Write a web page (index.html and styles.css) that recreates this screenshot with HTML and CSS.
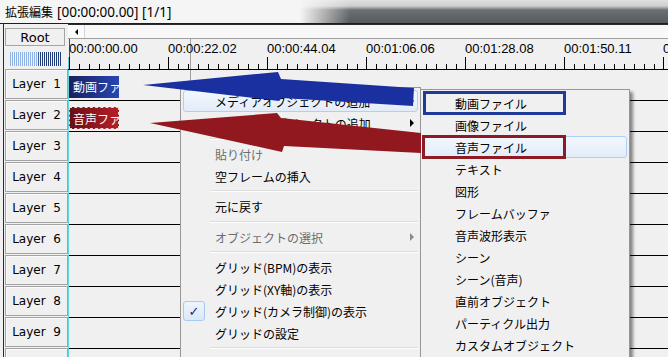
FILE: index.html
```html
<!DOCTYPE html>
<html lang="ja">
<head>
    <meta charset="UTF-8">
    <title>拡張編集</title>
    <link rel="stylesheet" href="styles.css">
</head>
<body>
    <div class="window">
        <div class="titlebar">
            <span class="title-jp">拡張編集</span>
            <span class="title-time">[00:00:00.00] [1/1]</span>
        </div>

        <div class="editor">
            <div class="side">
                <div class="root-btn">Root</div>
                <div class="meter"></div>
                <div class="layer-btn">Layer  1</div>
                <div class="layer-btn">Layer  2</div>
                <div class="layer-btn">Layer  3</div>
                <div class="layer-btn">Layer  4</div>
                <div class="layer-btn">Layer  5</div>
                <div class="layer-btn">Layer  6</div>
                <div class="layer-btn">Layer  7</div>
                <div class="layer-btn">Layer  8</div>
                <div class="layer-btn">Layer  9</div>
                <div class="layer-btn">Layer 10</div>
            </div>

            <div class="timeline">
                <div class="hscroll">
                    <span class="hscroll-btn"></span>
                    <span class="hscroll-thumb"></span>
                </div>
                <div class="ruler">
                    <svg class="ruler-ticks" width="600" height="30" viewBox="0 0 600 30">
                        <defs>
                            <pattern id="ticks" x="1" y="0" width="99" height="30" patternUnits="userSpaceOnUse">
                                <rect x="0" y="18" width="1" height="12" fill="#000"/>
                                <rect x="10" y="25" width="1" height="5" fill="#000"/>
                                <rect x="20" y="25" width="1" height="5" fill="#000"/>
                                <rect x="30" y="25" width="1" height="5" fill="#000"/>
                                <rect x="40" y="25" width="1" height="5" fill="#000"/>
                                <rect x="50" y="25" width="1" height="5" fill="#000"/>
                                <rect x="60" y="25" width="1" height="5" fill="#000"/>
                                <rect x="70" y="25" width="1" height="5" fill="#000"/>
                                <rect x="80" y="25" width="1" height="5" fill="#000"/>
                                <rect x="90" y="25" width="1" height="5" fill="#000"/>
                            </pattern>
                        </defs>
                        <rect x="0" y="0" width="600" height="30" fill="url(#ticks)"/>
                        <rect x="122" y="0" width="1" height="30" fill="#a0a0a0"/>
                        <rect x="1" y="0" width="1" height="18" fill="#d01818"/>
                        <rect x="0" y="18" width="1" height="12" fill="#5fd6de"/>
                    </svg>
                    <div class="ruler-labels">
                        <span>00:00:00.00</span>
                        <span>00:00:22.02</span>
                        <span>00:00:44.04</span>
                        <span>00:01:06.06</span>
                        <span>00:01:28.08</span>
                        <span>00:01:50.11</span>
                        <span>00:02:12.13</span>
                    </div>
                </div>
                <div class="rows">
                    <div class="row"><div class="clip clip-video">動画ファイル</div></div>
                    <div class="row"><div class="clip clip-audio">音声ファイル</div></div>
                    <div class="row"></div>
                    <div class="row"></div>
                    <div class="row"></div>
                    <div class="row"></div>
                    <div class="row"></div>
                    <div class="row"></div>
                    <div class="row"></div>
                    <div class="row"></div>
                </div>
            </div>
        </div>

        <!-- right click menu -->
        <div class="menu menu-main">
            <div class="menu-item is-hot has-sub"><span class="gutter"></span>メディアオブジェクトの追加<span class="sub-arrow"></span></div>
            <div class="menu-item has-sub"><span class="gutter"></span>フィルタオブジェクトの追加<span class="sub-arrow"></span></div>
            <div class="menu-sep"></div>
            <div class="menu-item is-disabled"><span class="gutter"></span>貼り付け</div>
            <div class="menu-item"><span class="gutter"></span>空フレームの挿入</div>
            <div class="menu-sep sep-thin"></div>
            <div class="menu-item"><span class="gutter"></span>元に戻す</div>
            <div class="menu-sep"></div>
            <div class="menu-item is-disabled has-sub"><span class="gutter"></span>オブジェクトの選択<span class="sub-arrow"></span></div>
            <div class="menu-sep sep-thin"></div>
            <div class="menu-item"><span class="gutter"></span>グリッド(BPM)の表示</div>
            <div class="menu-item"><span class="gutter"></span>グリッド(XY軸)の表示</div>
            <div class="menu-item"><span class="gutter"><span class="check">✓</span></span>グリッド(カメラ制御)の表示</div>
            <div class="menu-item"><span class="gutter"></span>グリッドの設定</div>
            <div class="menu-sep sep-thin"></div>
            <div class="menu-item"><span class="gutter"></span>シーンの設定</div>
        </div>

        <div class="menu menu-sub">
            <div class="menu-item"><span class="gutter"></span>動画ファイル</div>
            <div class="menu-item"><span class="gutter"></span>画像ファイル</div>
            <div class="menu-item is-hot"><span class="gutter"></span>音声ファイル</div>
            <div class="menu-item"><span class="gutter"></span>テキスト</div>
            <div class="menu-item"><span class="gutter"></span>図形</div>
            <div class="menu-item"><span class="gutter"></span>フレームバッファ</div>
            <div class="menu-item"><span class="gutter"></span>音声波形表示</div>
            <div class="menu-item"><span class="gutter"></span>シーン</div>
            <div class="menu-item"><span class="gutter"></span>シーン(音声)</div>
            <div class="menu-item"><span class="gutter"></span>直前オブジェクト</div>
            <div class="menu-item"><span class="gutter"></span>パーティクル出力</div>
            <div class="menu-item"><span class="gutter"></span>カスタムオブジェクト</div>
        </div>

        <!-- annotations -->
        <div class="mark mark-blue"></div>
        <div class="mark mark-red"></div>
        <svg class="arrows" width="668" height="357" viewBox="0 0 668 357">
            <polygon points="143,85 278,72 281,79 414,88 413,106 282,98 279,101" fill="#1b30a0"/>
            <polygon points="150,123 277,113 281,118 421,133 421,153 284,146 282,152" fill="#921820"/>
        </svg>
    </div>
</body>
</html>
```

FILE: styles.css
```css
body {
    margin: 0;
    background: #f0f0f0;
    font-family: "Noto Sans CJK JP", sans-serif;
    color: #000;
}

.window {
    position: relative;
    width: 668px;
    height: 357px;
    overflow: hidden;
    background: #f0f0f0;
}

/* title bar, aero glass on the right */
.titlebar {
    height: 24px;
    box-sizing: border-box;
    border-bottom: 1px solid #1e1e1e;
    padding-left: 5px;
    display: flex;
    align-items: center;
    gap: 4px;
    background:
        linear-gradient(to right, #f5f5f5 300px, rgba(245, 245, 245, 0) 350px),
        linear-gradient(to bottom, #e0e0e0 0, #cfcfcf 6px, #6c6f72 10px, #585b5e 23px);
}

.title-jp {
    font-size: 12px;
}

.title-time {
    font-family: "Noto Sans", sans-serif;
    font-size: 13.5px;
}

.editor {
    display: flex;
    height: 333px;
}

/* layer buttons */
.side {
    flex-shrink: 0;
    width: 63px;
    margin-left: 3px;
    padding-left: 1px;
    padding-top: 4px;
    border-left: 1px solid #2b2b2b;
    font-family: "DejaVu Sans", sans-serif;
    font-size: 12px;
}

.root-btn {
    width: 60px;
    height: 18px;
    box-sizing: border-box;
    border: 1px solid #a5a5a5;
    display: flex;
    align-items: center;
    justify-content: center;
    font-size: 13px;
}

.meter {
    width: 52px;
    height: 14px;
    margin: 6px 0 3px 5px;
    background:
        repeating-linear-gradient(to right, transparent 0 1px, #f4f4f4 1px 2px),
        linear-gradient(to right, #8fb2e6 0, #8fb2e6 52%, #1f3a78 56%, #1f3a78 100%);
}

.layer-btn {
    height: 30px;
    box-sizing: border-box;
    margin-bottom: 1px;
    border: 1px solid #a3a3a3;
    box-shadow: inset 1px 1px 0 #fbfbfb;
    display: flex;
    align-items: center;
    justify-content: center;
    white-space: pre;
}

/* timeline */
.timeline {
    flex: 1;
    min-width: 0;
    overflow: hidden;
    display: flex;
    flex-direction: column;
}

.hscroll {
    height: 15px;
    flex-shrink: 0;
    box-sizing: border-box;
    border-top: 1px solid #2b2b2b;
    border-bottom: 1px solid #a0a0a0;
    background: #fbfbfb;
    display: flex;
}

.hscroll-btn {
    width: 16px;
    display: flex;
    align-items: center;
    justify-content: center;
    border-right: 1px solid #d4d4d4;
}

.hscroll-btn::before {
    content: "";
    border-right: 3px solid #000;
    border-top: 3px solid transparent;
    border-bottom: 3px solid transparent;
}

.hscroll-thumb {
    flex: 1;
    background: #f8f8f8;
}

.ruler {
    height: 31px;
    flex-shrink: 0;
    box-sizing: border-box;
    border-bottom: 1px solid #000;
    display: grid;
}

.ruler-ticks,
.ruler-labels {
    grid-area: 1 / 1;
}

.ruler-labels {
    display: flex;
    padding: 3px 0 0 1px;
    font-family: "Liberation Sans", sans-serif;
    font-size: 13px;
    line-height: 14px;
}

.ruler-labels span {
    width: 99px;
    flex-shrink: 0;
}

.rows {
    flex: 1;
    border-left: 1px solid #5fd6de;
    background: linear-gradient(#a0a0a0, #a0a0a0) no-repeat 121px 0 / 1px 100%;
}

.row {
    height: 31px;
    box-sizing: border-box;
    border-bottom: 1px solid #000;
    padding-top: 6px;
}

.clip {
    width: 50px;
    height: 22px;
    box-sizing: border-box;
    padding-left: 4px;
    overflow: hidden;
    white-space: nowrap;
    color: #fff;
    font-size: 12px;
    line-height: 21px;
}

.clip-video {
    background: linear-gradient(to right, #17205e, #2846b4);
}

.clip-audio {
    background: linear-gradient(to right, #6a0f15, #b51f27);
    border: 1px dashed #f4d8d8;
    padding-left: 3px;
}

/* context menus */
.menu {
    position: absolute;
    background: #f0f0f0;
    border: 1px solid #979797;
    padding: 2px;
    font-size: 12px;
}

.menu-main {
    left: 180px;
    top: 87px;
    width: 235px;
}

.menu-sub {
    left: 420px;
    top: 89px;
    width: 204px;
    box-shadow: 3px 3px 3px rgba(0, 0, 0, 0.45);
}

.menu-item {
    height: 22px;
    box-sizing: border-box;
    display: flex;
    align-items: center;
    white-space: nowrap;
}

.gutter {
    width: 32px;
    flex-shrink: 0;
    display: flex;
    align-items: center;
}

.is-hot {
    border: 1px solid #aecff7;
    border-radius: 3px;
    background: linear-gradient(#f2f7fd, #e2ecf9);
}

.is-hot .gutter {
    width: 31px;
}

.is-disabled {
    color: #6d6d6d;
}

.sub-arrow {
    margin-left: auto;
    margin-right: 4px;
    border-left: 4px solid #000;
    border-top: 4px solid transparent;
    border-bottom: 4px solid transparent;
}

.is-hot .sub-arrow {
    margin-right: 3px;
}

.is-disabled .sub-arrow {
    border-left-color: #8a8a8a;
}

.menu-sep {
    height: 9px;
    margin-left: 27px;
    display: flex;
    align-items: center;
}

.menu-sep::before {
    content: "";
    flex: 1;
    border-top: 1px solid #dcdcdc;
    border-bottom: 1px solid #fff;
}

.sep-thin {
    height: 8px;
}

.check {
    width: 22px;
    height: 20px;
    box-sizing: border-box;
    border: 1px solid #a9c9ef;
    border-radius: 3px;
    background: linear-gradient(#eef5fd, #dce8f8);
    display: flex;
    align-items: center;
    justify-content: center;
    color: #1c2a8a;
    font-family: "DejaVu Sans", sans-serif;
    font-size: 13px;
}

/* red / blue annotation boxes and arrows */
.mark {
    position: absolute;
    box-sizing: border-box;
    border: 3px solid;
}

.mark-blue {
    left: 423px;
    top: 91px;
    width: 143px;
    height: 24px;
    border-color: #1f3a98;
}

.mark-red {
    left: 422px;
    top: 135px;
    width: 144px;
    height: 24px;
    border-color: #8c1b24;
}

.arrows {
    position: absolute;
    left: 0;
    top: 0;
    pointer-events: none;
}
```
